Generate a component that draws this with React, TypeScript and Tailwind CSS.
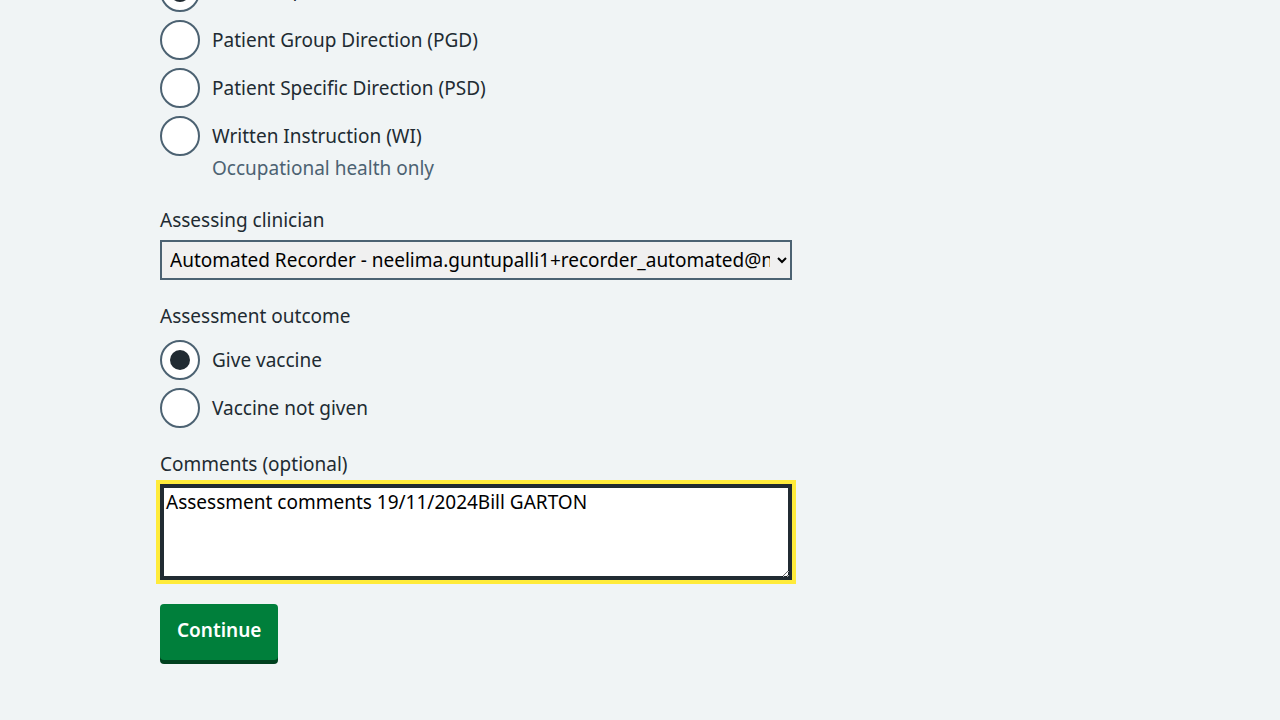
import React from "react";

const font = { fontFamily: '"Noto Sans", "Open Sans", Arial, sans-serif' };

function Radio({ checked, label, hint, raise }: { checked?: boolean; label: string; hint?: string; raise?: boolean }) {
  return (
    <div className="flex flex-col">
      <div className="flex items-center">
        <span className="flex h-10 w-10 shrink-0 items-center justify-center rounded-full border-2 border-[#4c6272] bg-white">
          {checked && <span className="h-5 w-5 rounded-full bg-[#212b32]" />}
        </span>
        <span className={`pl-3 text-[19px] leading-7 text-[#212b32] ${raise ? "pb-[6px]" : ""}`}>{label}</span>
      </div>
      {hint && <div className="-mt-0.5 pl-[52px] text-[19px] leading-7 text-[#4c6272]">{hint}</div>}
    </div>
  );
}

export default function App() {
  return (
    <div className="min-h-[720px] overflow-hidden bg-[#f0f4f5]" style={font}>
      <div className="ml-[160px] w-[632px] pb-14">
        <div className="-mt-[28px] mb-6 flex flex-col gap-2">
          <Radio checked raise label="National protocol (NP)" />
          <Radio label="Patient Group Direction (PGD)" />
          <Radio label="Patient Specific Direction (PSD)" />
          <Radio label="Written Instruction (WI)" hint="Occupational health only" />
        </div>

        <div className="mb-[22px]">
          <div className="mb-1.5 text-[19px] leading-7 text-[#212b32]">Assessing clinician</div>
          <select
            className="block h-10 w-full border-2 border-[#4c6272] bg-[#f0f0f0] px-1 text-[19px] text-black"
            style={font}
            defaultValue="a"
          >
            <option value="a">Automated Recorder - neelima.guntupalli1+recorder_automated@nhs.net</option>
          </select>
        </div>

        <div className="mb-[22px]">
          <div className="mb-2.5 text-[19px] leading-7 text-[#212b32]">Assessment outcome</div>
          <div className="flex flex-col gap-2">
            <Radio checked label="Give vaccine" />
            <Radio label="Vaccine not given" />
          </div>
        </div>

        <div className="mb-6">
          <div className="mb-1.5 text-[19px] leading-7 text-[#212b32]">Comments (optional)</div>
          <textarea
            className="block h-24 w-full resize-y border-2 border-[#212b32] bg-white px-1 py-0.5 text-[19px] leading-7 text-black shadow-[inset_0_0_0_2px_#212b32] outline-4 outline-offset-0 outline-[#ffeb3b]"
            style={font}
            rows={3}
            defaultValue="Assessment comments 19/11/2024Bill GARTON"
          />
        </div>

        <button className="rounded bg-[#007f3b] px-[17px] pb-[16px] pt-[12px] text-[19px] font-semibold leading-7 text-white shadow-[0_4px_0_#00401e]">
          Continue
        </button>
      </div>
    </div>
  );
}
